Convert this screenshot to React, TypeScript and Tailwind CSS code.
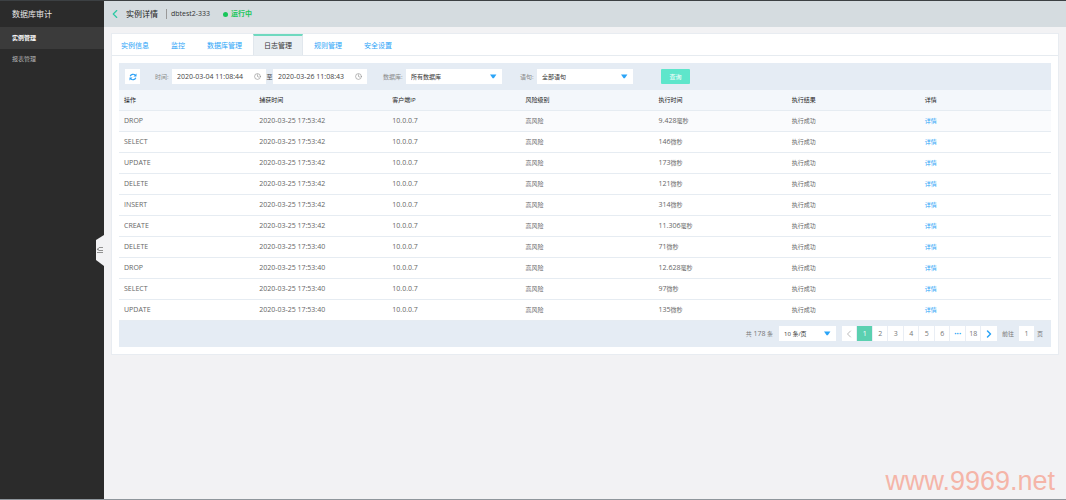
import { ChevronLeft, ChevronRight, Clock } from 'lucide-react';

const tabs = ['实例信息', '监控', '数据库管理', '日志管理', '规则管理', '安全设置'];

const columns = ['操作', '捕获时间', '客户端IP', '风险级别', '执行时间', '执行结果', '详情'];

const logs = [
  { op: 'DROP', time: '2020-03-25 17:53:42', cost: '9.428', unit: '毫秒' },
  { op: 'SELECT', time: '2020-03-25 17:53:42', cost: '146', unit: '微秒' },
  { op: 'UPDATE', time: '2020-03-25 17:53:42', cost: '173', unit: '微秒' },
  { op: 'DELETE', time: '2020-03-25 17:53:42', cost: '121', unit: '微秒' },
  { op: 'INSERT', time: '2020-03-25 17:53:42', cost: '314', unit: '微秒' },
  { op: 'CREATE', time: '2020-03-25 17:53:42', cost: '11.306', unit: '毫秒' },
  { op: 'DELETE', time: '2020-03-25 17:53:40', cost: '71', unit: '微秒' },
  { op: 'DROP', time: '2020-03-25 17:53:40', cost: '12.628', unit: '毫秒' },
  { op: 'SELECT', time: '2020-03-25 17:53:40', cost: '97', unit: '微秒' },
  { op: 'UPDATE', time: '2020-03-25 17:53:40', cost: '135', unit: '微秒' },
];

const pages = ['1', '2', '3', '4', '5', '6', '···', '18'];

function RefreshIcon() {
  return (
    <svg viewBox="0 0 16 16" className="size-[8px]" fill="none" stroke="#2a9ff5" strokeWidth="2.4">
      <path d="M2.4 6.6A6 6 0 0 1 12.4 4.4" />
      <path d="M13.6 9.4A6 6 0 0 1 3.6 11.6" />
      <path d="M15 1v6H9z" fill="#2a9ff5" stroke="none" />
      <path d="M1 15V9h6z" fill="#2a9ff5" stroke="none" />
    </svg>
  );
}

function Select({ id, label, value, className }: { id: string; label: string; value: string; className: string }) {
  return (
    <div className={`relative h-[15px] bg-white ${className}`}>
      <select
        id={id}
        aria-label={label}
        className="block h-full w-full appearance-none bg-transparent pl-[5px] text-[6px] text-[#333]"
      >
        <option>{value}</option>
      </select>
      <svg viewBox="0 0 8 5" className="pointer-events-none absolute top-[5px] right-[5px] h-[5px] w-[8px]">
        <path d="M1 0.5h6.4L4.8 4.2h-1.2z" fill="#2ba4f7" />
      </svg>
    </div>
  );
}

function DateField({ id, label, value }: { id: string; label: string; value: string }) {
  return (
    <div className="flex h-[15px] w-[94px] items-center bg-white px-[5px]">
      <input
        id={id}
        aria-label={label}
        defaultValue={value}
        className="h-full min-w-0 flex-1 bg-transparent text-[7px] text-[#444] outline-none"
      />
      <Clock className="size-[7px] text-[#888]" strokeWidth={2} />
    </div>
  );
}

function Sidebar() {
  return (
    <aside className="relative w-[104px] shrink-0 bg-[#2b2b2b] text-[#b5b5b5]">
      <h1 className="flex h-[26px] items-center pl-3 text-[8px] text-[#e8e8e8]">数据库审计</h1>
      <nav>
        <a href="#instances" className="flex h-[22px] items-center bg-[#3b3b3b] pl-3 font-bold text-white">
          实例管理
        </a>
        <a href="#reports" className="flex h-[20px] items-center pl-3">
          报表管理
        </a>
      </nav>
      <button type="button" aria-label="收起菜单" className="absolute top-[234px] right-0 h-[31px] w-[9px]">
        <svg viewBox="0 0 9 31" className="h-full w-full">
          <path d="M9 0L1 5v20l8 6z" fill="#f2f2f4" />
          <path d="M4 12.5h4M4 15.5h4M2 17.5h6" stroke="#777" strokeWidth="0.8" />
          <path d="M3.6 12.6v3.4L1.8 14.3z" fill="#777" />
        </svg>
      </button>
    </aside>
  );
}

function Filters() {
  return (
    <form className="flex h-[27px] items-center bg-[#e5ecf4] pl-[6px] text-[#888]">
      <button type="button" aria-label="刷新" className="flex size-[15px] items-center justify-center bg-white">
        <RefreshIcon />
      </button>
      <label htmlFor="from" className="ml-[15px] w-[17px]">
        时间:
      </label>
      <DateField id="from" label="开始时间" value="2020-03-04 11:08:44" />
      <span className="w-[7px] text-center text-[#444]">至</span>
      <DateField id="to" label="结束时间" value="2020-03-26 11:08:43" />
      <label htmlFor="database" className="ml-4 w-[23px]">
        数据库:
      </label>
      <Select id="database" label="数据库" value="所有数据库" className="w-[96px]" />
      <label htmlFor="statement" className="ml-[18px] w-[17px]">
        语句:
      </label>
      <Select id="statement" label="语句" value="全部语句" className="w-[96px]" />
      <button type="button" className="ml-7 h-[15px] w-[29px] rounded-[1px] bg-[#5ee6cb] text-white">
        查询
      </button>
    </form>
  );
}

function LogTable() {
  return (
    <table className="w-full table-fixed text-left">
      <thead>
        <tr className="h-[20px] border-b border-[#e6ecf2] bg-[#f3f7fb] text-[#222]">
          {columns.map((name) => (
            <th key={name} className="p-0 pl-[7px] font-normal first:pl-[5px]">
              {name}
            </th>
          ))}
        </tr>
      </thead>
      <tbody className="text-[#666]">
        {logs.map((log, i) => (
          <tr key={i} className="h-[21px] border-b border-[#e6ecf2] first:bg-[#fafbfd]">
            <td className="p-0 pl-[5px] text-[7px]">{log.op}</td>
            <td className="p-0 pl-[7px] text-[7px]">{log.time}</td>
            <td className="p-0 pl-[7px] text-[7px]">10.0.0.7</td>
            <td className="p-0 pl-[7px]">高风险</td>
            <td className="p-0 pl-[7px]">
              <span className="text-[7px]">{log.cost}</span>
              {log.unit}
            </td>
            <td className="p-0 pl-[7px]">执行成功</td>
            <td className="p-0 pl-[7px]">
              <a href="#detail" className="text-[#2ba4f7]">
                详情
              </a>
            </td>
          </tr>
        ))}
      </tbody>
    </table>
  );
}

function Pagination() {
  return (
    <div className="flex h-[26px] items-center justify-end bg-[#e5ecf4] pr-2 text-[#777]">
      <span>
        共 <span className="text-[7px]">178</span> 条
      </span>
      <Select id="page-size" label="每页条数" value="10 条/页" className="mx-[6px] w-[57px]" />
      <nav aria-label="分页" className="grid h-[15px] w-[155px] grid-cols-10 divide-x divide-[#e9eef5] bg-white">
        <button type="button" aria-label="上一页" className="flex items-center justify-center text-[#bbb]">
          <ChevronLeft className="size-[12px]" strokeWidth={2} />
        </button>
        {pages.map((page) => (
          <button
            key={page}
            type="button"
            className={
              page === '1'
                ? 'bg-[#5bd0b0] text-[7px] text-white'
                : page === '···'
                  ? 'text-[8px] font-bold text-[#2ba4f7]'
                  : 'text-[7px] text-[#777]'
            }
          >
            {page}
          </button>
        ))}
        <button type="button" aria-label="下一页" className="flex items-center justify-center text-[#2ba4f7]">
          <ChevronRight className="size-[12px]" strokeWidth={3} />
        </button>
      </nav>
      <label htmlFor="goto" className="ml-[5px] w-[17px]">
        前往
      </label>
      <input id="goto" defaultValue="1" className="h-[15px] w-[15px] bg-white text-center text-[7px]" />
      <span className="ml-[3px]">页</span>
    </div>
  );
}

export default function App() {
  return (
    <div className="relative flex min-h-screen border-t border-b border-t-[#3c4043] border-b-[#8f969c] bg-[#f2f2f4] font-['Open_Sans','Noto_Sans_CJK_SC',sans-serif] text-[6px] leading-[10px]">
      <Sidebar />
      <div className="min-w-0 flex-1">
        <header className="flex h-[26px] items-center bg-[#d5dce0] pl-1 text-[#333]">
          <a href="#back" aria-label="返回" className="text-[#2dc9a4]">
            <ChevronLeft className="size-[14px]" strokeWidth={2} />
          </a>
          <h2 className="ml-1 text-[8px] text-[#222]">实例详情</h2>
          <span className="ml-2 h-[10px] w-px bg-[#999]" />
          <span className="ml-1 text-[7px]">dbtest2-333</span>
          <span className="ml-[13px] size-[5px] rounded-full bg-[#19c65a]" />
          <span className="ml-[3px] text-[7px] font-bold text-[#19c65a]">运行中</span>
        </header>
        <main className="mx-[7px] mt-[6px] border border-[#e8ecf1] bg-white">
          <div role="tablist" className="flex h-[22px] border-b border-[#e6ebf0] text-[7px]">
            {tabs.map((tab) => (
              <button
                key={tab}
                type="button"
                role="tab"
                aria-selected={tab === '日志管理'}
                className={
                  tab === '日志管理'
                    ? 'border-x border-t-2 border-x-[#e1e7ed] border-t-[#6fd9bf] bg-[#ebf0f4] px-[10px] text-[#333]'
                    : 'border-t-2 border-transparent px-[11px] text-[#2ba4f7] first:pl-[9px]'
                }
              >
                {tab}
              </button>
            ))}
          </div>
          <section className="m-[7px]">
            <Filters />
            <LogTable />
            <Pagination />
          </section>
        </main>
      </div>
      <div className="pointer-events-none absolute right-[11px] bottom-[3px] font-['Liberation_Sans',sans-serif] text-[27px] leading-[30px] text-[#f5b5a8]">
        www.9969.net
      </div>
    </div>
  );
}
